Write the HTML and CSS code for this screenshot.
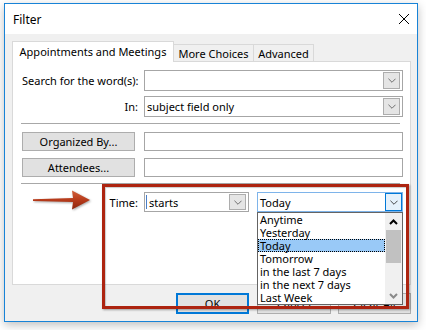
FILE: index.html
```html
<!DOCTYPE html>
<html>
<head>
<meta charset="utf-8">
<link rel="stylesheet" href="styles.css">
</head>
<body>
<div class="window">
  <div class="titlebar">
    <span class="title">Filter</span>
    <svg class="close" viewBox="0 0 10 10"><path d="M0,0 L10,10 M10,0 L0,10" stroke="#000" stroke-width="1" fill="none"/></svg>
  </div>
  <div class="content">
    <div class="tabs">
      <div class="tab active">Appointments and Meetings</div>
      <div class="tab more">More Choices</div>
      <div class="tab adv">Advanced</div>
    </div>
    <div class="panel">
      <div class="grid rows-a">
        <span class="lbl">Search for the word(s):</span>
        <div class="combo"><span class="combo-text"></span><span class="drop"><svg class="chev" viewBox="0 0 9 5"><polyline points="0.5,0.5 4.5,4.5 8.5,0.5" fill="none" stroke="#606060" stroke-width="1"/></svg></span></div>
        <span class="lbl">In:</span>
        <div class="combo"><span class="combo-text">subject field only</span><span class="drop"><svg class="chev" viewBox="0 0 9 5"><polyline points="0.5,0.5 4.5,4.5 8.5,0.5" fill="none" stroke="#606060" stroke-width="1"/></svg></span></div>
      </div>
      <div class="sep"></div>
      <div class="grid rows-b">
        <button class="btn">Organized By...</button>
        <div class="field"></div>
        <button class="btn">Attendees...</button>
        <div class="field"></div>
      </div>
      <div class="sep"></div>
      <div class="grid rows-c">
        <span class="lbl">Time:</span>
        <div class="time-combos">
          <div class="combo starts"><span class="combo-text"><span class="cursor"></span>starts</span><span class="drop"><svg class="chev" viewBox="0 0 9 5"><polyline points="0.5,0.5 4.5,4.5 8.5,0.5" fill="none" stroke="#606060" stroke-width="1"/></svg></span></div>
          <div class="combo today"><span class="combo-text">Today</span><span class="drop"><svg class="chev" viewBox="0 0 9 5"><polyline points="0.5,0.5 4.5,4.5 8.5,0.5" fill="none" stroke="#303030" stroke-width="1"/></svg></span>
            <div class="listbox">
              <ul class="items">
                <li>Anytime</li>
                <li>Yesterday</li>
                <li class="sel">Today</li>
                <li>Tomorrow</li>
                <li>in the last 7 days</li>
                <li>in the next 7 days</li>
                <li>Last Week</li>
              </ul>
              <div class="scrollbar">
                <div class="sb-btn"><svg viewBox="0 0 9 6"><polyline points="1,5 4.5,1.5 8,5" fill="none" stroke="#000" stroke-width="2"/></svg></div>
                <div class="sb-thumb"></div>
                <div class="sb-track"></div>
                <div class="sb-btn"><svg viewBox="0 0 9 6"><polyline points="1,1 4.5,4.5 8,1" fill="none" stroke="#8a8a8a" stroke-width="2"/></svg></div>
              </div>
            </div>
          </div>
        </div>
      </div>
    </div>
    <div class="footer">
      <button class="btn ok">OK</button>
      <button class="btn cancel">Cancel</button>
      <button class="btn clear">Clear All</button>
    </div>
  </div>
</div>
<div class="annot-box"></div>
<svg class="annot-arrow" viewBox="0 0 64 28">
  <defs>
    <linearGradient id="ag" x1="0" y1="0" x2="0" y2="1">
      <stop offset="0" stop-color="#d2603a"/>
      <stop offset="0.5" stop-color="#b63a1a"/>
      <stop offset="1" stop-color="#8c260e"/>
    </linearGradient>
  </defs>
  <path d="M3,13.3 L43,12 L42,4.5 L60,14 L42,23.5 L43,16 L3,14.9 Z" fill="url(#ag)"/>
</svg>
</body>
</html>
```
FILE: styles.css
```css
* { box-sizing: border-box; }
html, body { margin: 0; }
body {
  position: relative;
  padding: 3px 0 0 4px;
  width: 426px;
  height: 330px;
  overflow: hidden;
  background: #fff;
  font-family: "Noto Sans", "Open Sans", sans-serif;
  font-size: 11px;
  color: #000;
}
.window {
  width: 414px;
  height: 319px;
  border: 1px solid #1883d7;
  background: #f0f0f0;
  display: flex;
  flex-direction: column;
  box-shadow: 0 3px 9px rgba(0,0,0,0.25);
}
.titlebar {
  flex: none;
  height: 30px;
  background: #fff;
  display: flex;
  align-items: center;
  padding: 0 8px 0 8px;
}
.title { font-size: 12px; }
.close { margin-left: auto; width: 10px; height: 10px; }
.content {
  flex: 1;
  padding: 7px 6px 7px 7px;
  display: flex;
  flex-direction: column;
}
.tabs {
  flex: none;
  display: flex;
  align-items: flex-end;
  height: 20px;
}
.tab {
  height: 17px;
  border: 1px solid #d9d9d9;
  border-bottom: 0;
  background: #f0f0f0;
  display: flex;
  align-items: center;
  justify-content: center;
  margin-left: -1px;
  white-space: nowrap;
}
.tab.active {
  height: 21px;
  width: 162px;
  margin-left: 0;
  margin-bottom: -1px;
  padding-bottom: 1px;
  background: #fff;
  position: relative;
  z-index: 1;
}
.tab.more { width: 81px; }
.tab.adv { width: 61px; }
.panel {
  flex: none;
  height: 224px;
  border: 1px solid #d9d9d9;
  background: #fff;
  padding: 8px 7px 0 9px;
}
.grid {
  display: grid;
  grid-template-columns: 116px 259px;
  column-gap: 6px;
}
.rows-a { grid-auto-rows: 21px; row-gap: 5px; }
.rows-b { grid-template-columns: 113px 259px; column-gap: 9px; grid-auto-rows: 19px; row-gap: 7px; }
.rows-c { grid-auto-rows: 20px; }
.lbl {
  text-align: right;
  align-self: center;
  white-space: nowrap;
}
.sep {
  height: 1px;
  width: 379px;
  margin: 6px 0 8px -1px;
  background: #a8a8a8;
}
.combo {
  position: relative;
  display: flex;
  align-items: center;
  border: 1px solid #a6a6a6;
  background: #fff;
  padding-right: 2px;
}
.combo-text {
  flex: 1;
  padding-left: 2px;
  white-space: nowrap;
  display: flex;
  align-items: center;
}
.drop {
  width: 17px;
  height: 17px;
  border: 1px solid #adadad;
  background: #e5e5e5;
  display: flex;
  align-items: center;
  justify-content: center;
}
.chev { width: 8px; height: 5px; }
.field {
  border: 1px solid #a6a6a6;
  background: #fff;
}
.btn {
  font: inherit;
  color: #000;
  border: 1px solid #adadad;
  background: #e1e1e1;
  padding: 0;
  margin: 0;
  white-space: nowrap;
}
.time-combos {
  display: flex;
  gap: 8px;
}
.combo.starts { width: 105px; }
.combo.starts .drop { height: 16px; }
.combo.starts .combo-text { padding-left: 1px; }
.cursor {
  display: inline-block;
  width: 1px;
  height: 14px;
  background: #4a7fc8;
  margin-right: 2px;
}
.combo.today {
  width: 146px;
  border-color: #7eb4ea;
  padding-right: 0;
}
.combo.today .combo-text { padding-left: 2px; }
.combo.today .drop {
  height: 18px;
  border-color: #0078d7;
  background: #e5f1fb;
}
.listbox {
  position: absolute;
  left: -1px;
  top: 100%;
  margin-top: 1px;
  width: 146px;
  height: 93px;
  border: 1px solid #646464;
  background: #fff;
  display: flex;
  z-index: 5;
}
.items {
  list-style: none;
  margin: 0;
  padding: 0;
  flex: 1;
}
.items li {
  height: 13px;
  line-height: 13px;
  padding-left: 2px;
  white-space: nowrap;
}
.items li.sel {
  background: #99c9f7;
  outline: 1px dotted #000;
  outline-offset: -1px;
}
.scrollbar {
  width: 17px;
  background: #f0f0f0;
  display: flex;
  flex-direction: column;
}
.sb-btn {
  height: 17px;
  display: flex;
  align-items: center;
  justify-content: center;
}
.sb-btn svg { width: 9px; height: 6px; }
.sb-thumb {
  height: 33px;
  margin: 0 1px;
  background: #c1c1c1;
}
.sb-track { flex: 1; }
.footer {
  flex: none;
  display: flex;
  justify-content: flex-end;
  margin-top: 8px;
  height: 21px;
}
.footer .btn { height: 21px; }
.btn.ok { width: 73px; border: 2px solid #0078d7; }
.btn.cancel { width: 74px; margin-left: 8px; }
.btn.clear { width: 73px; margin-left: 7px; }
.annot-box {
  position: absolute;
  left: 102px;
  top: 184px;
  width: 307px;
  height: 125px;
  border: 3px solid #ad2410;
  box-shadow: 1px 1px 2px rgba(0,0,0,0.35), inset 1px 1px 1px rgba(0,0,0,0.2);
  z-index: 10;
}
.annot-arrow {
  position: absolute;
  left: 30px;
  top: 186px;
  width: 64px;
  height: 28px;
  filter: drop-shadow(1px 1px 1px rgba(0,0,0,0.35));
  z-index: 10;
}
```
